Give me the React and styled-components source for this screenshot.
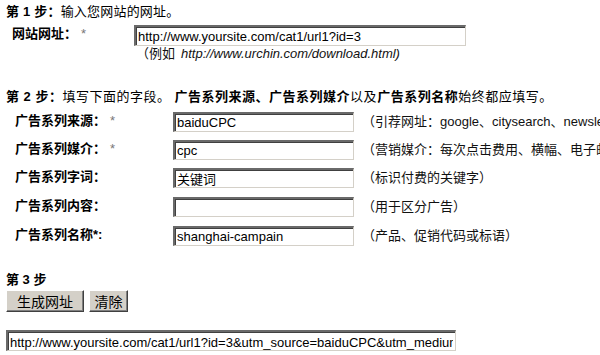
import React from "react";
import styled, { createGlobalStyle } from "styled-components";

const GlobalStyle = createGlobalStyle`
  html, body {
    margin: 0;
    padding: 0;
    background: #fff;
    overflow: hidden;
  }
  body {
    font-family: "Liberation Sans", Arial, "Noto Sans CJK SC", sans-serif;
    font-size: 13px;
    color: #000;
  }
`;

const Page = styled.div`
  width: 600px;
  height: 355px;
  padding: 4px 6px 0;
  box-sizing: border-box;
  overflow: hidden;
`;

const StepTitle = styled.div`
  line-height: 16px;
  height: 16px;
  white-space: nowrap;
  letter-spacing: ${(p) => p.$spacing || 0}px;
  margin-top: ${(p) => p.$top || 0}px;
`;

const Strong = styled.b`
  font-weight: bold;
`;

const Star = styled.span`
  color: #777;
  font-weight: normal;
  margin-left: 4px;
`;

const FieldRow = styled.div`
  display: grid;
  grid-template-columns: ${(p) => p.$labelWidth}px ${(p) => p.$inputWidth}px auto;
  column-gap: 8px;
  align-items: start;
  margin-top: ${(p) => p.$top || 0}px;
  height: 20px;
`;

const Label = styled.div`
  font-weight: bold;
  line-height: 16px;
  padding-top: 1px;
  padding-left: ${(p) => p.$indent}px;
  white-space: nowrap;
`;

const TextBox = styled.input`
  box-sizing: border-box;
  width: ${(p) => p.$width}px;
  height: ${(p) => p.$height || 20}px;
  margin: 0;
  padding: 0 2px;
  font-family: "Liberation Sans", Arial, "Noto Sans CJK SC", sans-serif;
  font-size: 13px;
  color: #000;
  background: #fff;
  border-top: 2px solid #6a6a6a;
  border-left: 2px solid #6a6a6a;
  border-right: 1px solid #d4d0c8;
  border-bottom: 1px solid #d4d0c8;
  box-shadow: inset 1px 1px 0 #404040;
  outline: none;
`;

const Hint = styled.div`
  line-height: 16px;
  padding-top: 2px;
  white-space: nowrap;
  color: #111;
`;

const Example = styled.div`
  margin-left: 130px;
  line-height: 16px;
  margin-top: 1px;
  white-space: nowrap;
  color: #111;

  i {
    margin-left: 6px;
  }
`;

const ButtonBar = styled.div`
  display: flex;
  gap: 5px;
  margin-top: 2px;
`;

const Button = styled.button`
  box-sizing: border-box;
  width: ${(p) => p.$width}px;
  height: 22px;
  margin: 0;
  padding: 0;
  font-family: "Noto Sans CJK SC", sans-serif;
  font-size: 14px;
  line-height: 18px;
  color: #000;
  background: #d4d0c8;
  border-top: 1px solid #fff;
  border-left: 1px solid #fff;
  border-right: 1px solid #404040;
  border-bottom: 1px solid #404040;
  box-shadow: inset -1px -1px 0 #808080;
`;

const ResultBox = styled(TextBox)`
  display: block;
  margin-top: 18px;
`;

const fields = [
  { label: "广告系列来源：", star: true, value: "baiduCPC", hint: "（引荐网址：google、citysearch、newsletter4）" },
  { label: "广告系列媒介：", star: true, value: "cpc", hint: "（营销媒介：每次点击费用、横幅、电子邮件）" },
  { label: "广告系列字词：", value: "关键词", hint: "（标识付费的关键字）" },
  { label: "广告系列内容：", value: "", hint: "（用于区分广告）" },
  { label: "广告系列名称*:", value: "shanghai-campain", hint: "（产品、促销代码或标语）" },
];

const tops = [7, 8, 8, 9, 9];

export default function App() {
  return (
    <>
      <GlobalStyle />
      <Page>
        <StepTitle $spacing={0.2}>
          <Strong>第 1 步：</Strong>输入您网站的网址。
        </StepTitle>
        <FieldRow $labelWidth={120} $inputWidth={332} $top={5}>
          <Label $indent={6}>
            网站网址：<Star>*</Star>
          </Label>
          <TextBox $width={332} $height={21} defaultValue="http://www.yoursite.com/cat1/url1?id=3" />
        </FieldRow>
        <Example>
          （例如<i>http://www.urchin.com/download.html)</i>
        </Example>

        <StepTitle $top={27} $spacing={0.5}>
          <Strong>第 2 步：</Strong>填写下面的字段。 <Strong>广告系列来源、广告系列媒介</Strong>以及
          <Strong>广告系列名称</Strong>始终都应填写。
        </StepTitle>
        {fields.map((f, i) => (
          <FieldRow key={f.label} $labelWidth={159} $inputWidth={181} $top={tops[i]}>
            <Label $indent={9}>
              {f.label}
              {f.star && <Star>*</Star>}
            </Label>
            <TextBox $width={181} defaultValue={f.value} />
            <Hint>{f.hint}</Hint>
          </FieldRow>
        ))}

        <StepTitle $top={26}>
          <Strong>第 3 步</Strong>
        </StepTitle>
        <ButtonBar>
          <Button $width={78}>生成网址</Button>
          <Button $width={39}>清除</Button>
        </ButtonBar>
        <ResultBox
          $width={450}
          $height={21}
          defaultValue="http://www.yoursite.com/cat1/url1?id=3&utm_source=baiduCPC&utm_medium=cpc&utm_term=关键词&utm_campaign=shanghai-campain"
        />
      </Page>
    </>
  );
}
